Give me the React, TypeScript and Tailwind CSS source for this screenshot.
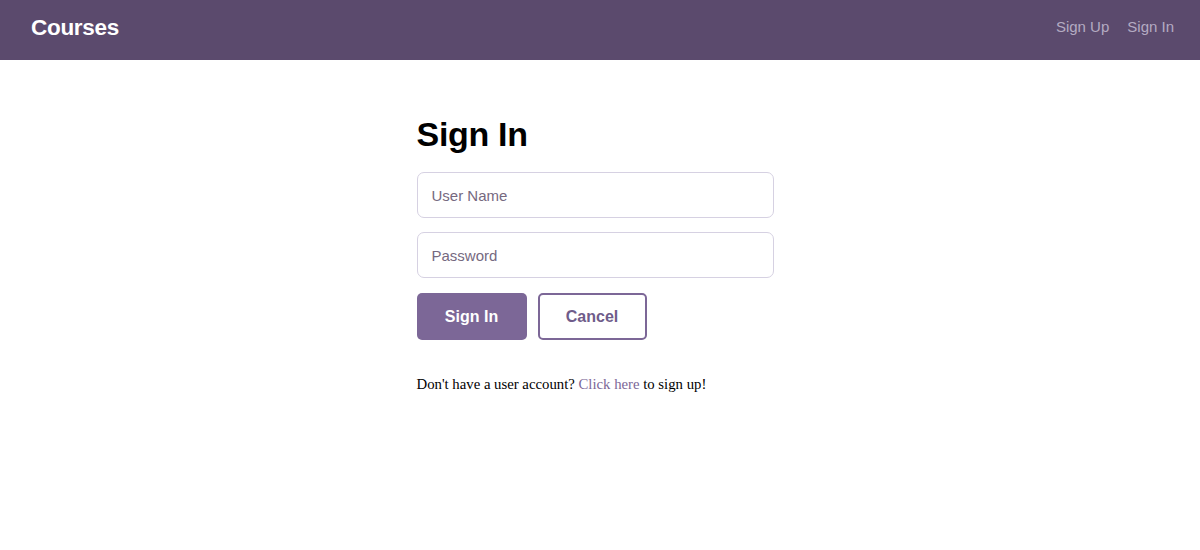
import React from 'react';

const sans = { fontFamily: '"Liberation Sans", Arial, sans-serif' };

export default function App() {
  return (
    <div className="min-h-[550px] bg-white" style={sans}>
      {/* Header */}
      <header className="h-[60px] bg-[#5b4a6d] flex items-center justify-between pl-[31px] pr-[26px]">
        <span className="text-white font-bold text-[22.5px] tracking-[-0.3px] pb-[4px]">Courses</span>
        <nav className="flex gap-[18px] text-[15px] text-[#b4abc2] pb-[6px]">
          <a href="#">Sign Up</a>
          <a href="#">Sign In</a>
        </nav>
      </header>

      {/* Form */}
      <div className="w-[357px] mx-auto pt-[54px] translate-x-[-5px]">
        <h1 className="text-[34px] font-bold text-black leading-[40px] tracking-[-0.3px] mb-[18px]">Sign In</h1>
        <form className="flex flex-col gap-[14px]" onSubmit={e => e.preventDefault()}>
          <input
            type="text"
            placeholder="User Name"
            className="h-[46px] w-full rounded-[7px] border border-[#d6d1e2] px-[14px] text-[15px] placeholder:text-[#76697f] outline-none"
          />
          <input
            type="password"
            placeholder="Password"
            className="h-[46px] w-full rounded-[7px] border border-[#d6d1e2] px-[14px] text-[15px] placeholder:text-[#76697f] outline-none"
          />
          <div className="flex gap-[11px] mt-[1px]">
            <button className="w-[110px] h-[47px] rounded-[5px] bg-[#7c6797] text-white font-bold text-[16px]">
              Sign In
            </button>
            <button className="w-[109px] h-[47px] rounded-[5px] border-2 border-[#7c6797] text-[#6f5c8a] font-bold text-[16px] bg-white">
              Cancel
            </button>
          </div>
        </form>
        <p className="mt-[33px] text-[14.75px] text-black" style={{ fontFamily: '"Liberation Serif", "Times New Roman", serif' }}>
          Don't have a user account? <a href="#" className="text-[#7c6797]">Click here</a> to sign up!
        </p>
      </div>
    </div>
  );
}
